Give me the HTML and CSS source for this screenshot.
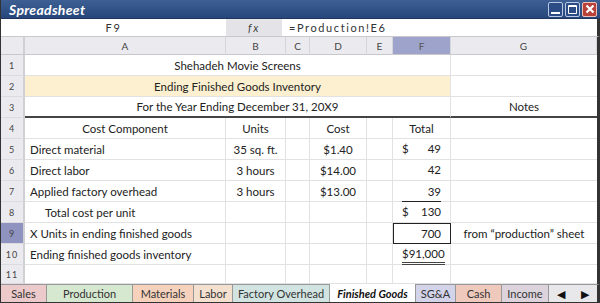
FILE: index.html
```html
<!DOCTYPE html>
<html>
  <head>
    <link rel="stylesheet" href="styles.css">
  </head>
  <body>
    <div class="window">
      <div class="titlebar">
        <span class="title">Spreadsheet</span>
        <div class="controls">
          <span class="btn btn--min"></span>
          <span class="btn btn--max"></span>
          <span class="btn btn--close">
            <svg width="10" height="10" viewBox="0 0 10 10"><path d="M1.5 1.5 L8.5 8.5 M8.5 1.5 L1.5 8.5" stroke="#fff" stroke-width="2.2"/></svg>
          </span>
        </div>
      </div>

      <div class="formula">
        <div class="namebox">F9</div>
        <div class="fx">fx</div>
        <div class="expr">=Production!E6</div>
      </div>

      <div class="sheet">
        <!-- column headers -->
        <div class="ch corner"></div>
        <div class="ch">A</div>
        <div class="ch">B</div>
        <div class="ch">C</div>
        <div class="ch">D</div>
        <div class="ch">E</div>
        <div class="ch ch--sel">F</div>
        <div class="ch">G</div>

        <!-- 1 -->
        <div class="rh">1</div>
        <div class="c span ctr">Shehadeh Movie Screens</div>
        <div class="c g"></div>
        <!-- 2 -->
        <div class="rh">2</div>
        <div class="c span ctr heading">Ending Finished Goods Inventory</div>
        <div class="c g"></div>
        <!-- 3 -->
        <div class="rh">3</div>
        <div class="c span ctr rule">For the Year Ending December 31, 20X9</div>
        <div class="c g ctr rule">Notes</div>

        <!-- 4 -->
        <div class="rh">4</div>
        <div class="c ctr">Cost Component</div>
        <div class="c ctr">Units</div>
        <div class="c"></div>
        <div class="c ctr">Cost</div>
        <div class="c"></div>
        <div class="c ctr">Total</div>
        <div class="c g"></div>

        <!-- 5 -->
        <div class="rh">5</div>
        <div class="c">Direct material</div>
        <div class="c ctr">35 sq. ft.</div>
        <div class="c"></div>
        <div class="c ctr">$1.40</div>
        <div class="c"></div>
        <div class="c amt"><span class="num"><span>$</span><span>49</span></span></div>
        <div class="c g"></div>

        <!-- 6 -->
        <div class="rh">6</div>
        <div class="c">Direct labor</div>
        <div class="c ctr">3 hours</div>
        <div class="c"></div>
        <div class="c ctr">$14.00</div>
        <div class="c"></div>
        <div class="c amt"><span class="num"><span></span><span>42</span></span></div>
        <div class="c g"></div>

        <!-- 7 -->
        <div class="rh">7</div>
        <div class="c">Applied factory overhead</div>
        <div class="c ctr">3 hours</div>
        <div class="c"></div>
        <div class="c ctr">$13.00</div>
        <div class="c"></div>
        <div class="c amt"><span class="num underline"><span></span><span>39</span></span></div>
        <div class="c g"></div>

        <!-- 8 -->
        <div class="rh">8</div>
        <div class="c indent">Total cost per unit</div>
        <div class="c"></div>
        <div class="c"></div>
        <div class="c"></div>
        <div class="c"></div>
        <div class="c amt"><span class="num"><span>$</span><span>130</span></span></div>
        <div class="c g"></div>

        <!-- 9 -->
        <div class="rh rh--sel">9</div>
        <div class="c">X Units in ending finished goods</div>
        <div class="c"></div>
        <div class="c"></div>
        <div class="c"></div>
        <div class="c"></div>
        <div class="c amt active"><span class="num underline"><span></span><span>700</span></span></div>
        <div class="c g ctr">from “production” sheet</div>

        <!-- 10 -->
        <div class="rh">10</div>
        <div class="c">Ending finished goods inventory</div>
        <div class="c"></div>
        <div class="c"></div>
        <div class="c"></div>
        <div class="c"></div>
        <div class="c amt"><span class="num double"><span></span><span>$91,000</span></span></div>
        <div class="c g"></div>

        <!-- 11 -->
        <div class="rh">11</div>
        <div class="c"></div>
        <div class="c"></div>
        <div class="c"></div>
        <div class="c"></div>
        <div class="c"></div>
        <div class="c"></div>
        <div class="c g"></div>
      </div>

      <div class="tabs">
        <span class="tab tab--sales">Sales</span>
        <span class="tab tab--production">Production</span>
        <span class="tab tab--materials">Materials</span>
        <span class="tab tab--labor">Labor</span>
        <span class="tab tab--overhead">Factory Overhead</span>
        <span class="tab tab--current">Finished Goods</span>
        <span class="tab tab--sga">SG&amp;A</span>
        <span class="tab tab--cash">Cash</span>
        <span class="tab tab--income">Income</span>
        <span class="tab tab--nav"><span>◀</span><span>▶</span></span>
      </div>
    </div>
  </body>
</html>
```
FILE: styles.css
```css
body {
  margin: 0;
  background: #fff;
  font-family: Lato, "Open Sans", sans-serif;
  color: #222;
}

.window {
  width: 600px;
  height: 303px;
  box-sizing: border-box;
  border-left: 1px solid #333;
  overflow: hidden;
}

/* title bar */
.titlebar {
  height: 19px;
  background: linear-gradient(#3d5f94, #27477a);
  border-bottom: 1px solid #1d3560;
  box-sizing: border-box;
  display: flex;
  align-items: center;
  justify-content: space-between;
  padding: 0 3px 0 8px;
}
.title {
  color: #fff;
  font-weight: bold;
  font-style: italic;
  font-size: 14px;
  letter-spacing: 0.3px;
}
.controls { display: flex; gap: 2px; }
.btn {
  width: 15px;
  height: 15px;
  box-sizing: border-box;
  border: 1px solid #b8c8e4;
  border-radius: 2px;
  background: #2c4c86;
  position: relative;
  display: flex;
  align-items: center;
  justify-content: center;
}
.btn--min::after {
  content: "";
  position: absolute;
  left: 2px; right: 2px; bottom: 2px;
  height: 2px;
  background: #fff;
}
.btn--max::after {
  content: "";
  position: absolute;
  left: 2px; right: 2px; top: 2px; bottom: 2px;
  border: 1px solid #fff;
  border-top-width: 2px;
  border-radius: 1px;
}
.btn--close { background: #b8413a; border-color: #f0c0b8; }

/* formula bar */
.formula {
  height: 17px;
  display: grid;
  grid-template-columns: 225px 56px 1fr;
  border-bottom: 1px solid #c8c8cc;
  border-right: 3px solid #333;
  font-size: 11px;
  letter-spacing: 1.6px;
  line-height: 17px;
}
.namebox { text-align: center; color: #333; }
.fx {
  background: #e4e4e8;
  text-align: center;
  font-style: italic;
  color: #444;
}
.expr { padding-left: 7px; color: #333; }

/* sheet grid */
.sheet {
  display: grid;
  grid-template-columns: 24px 201px 60px 24px 57px 26px 58px 146px;
  grid-template-rows: 18px repeat(10, 21px) 19px;
  border-right: 3px solid #333;
  font-size: 11.5px;
}
.ch {
  background: #ebebef;
  border-right: 1px solid #d6d6da;
  border-bottom: 1px solid #c8c8cc;
  font-size: 10px;
  color: #444;
  display: flex;
  align-items: center;
  justify-content: center;
}
.corner { border-right: 2px solid #d0d0d4; }
.ch--sel { background: #9ea3cc; color: #555; }

.rh {
  background: #ebebef;
  border-right: 2px solid #d0d0d4;
  border-bottom: 1px solid #dcdce0;
  font-size: 9px;
  color: #444;
  display: flex;
  align-items: center;
  justify-content: center;
  letter-spacing: 1px;
}
.rh--sel { background: #8f93bf; }

.c {
  border-right: 1px solid #e2e2e4;
  border-bottom: 1px solid #e2e2e4;
  display: flex;
  align-items: center;
  padding: 0 5px;
  white-space: nowrap;
  min-width: 0;
}
.c.g { border-right: none; }
.span { grid-column: span 6; }
.ctr { justify-content: center; padding: 0; }
.heading { background: #fcf0d0; }
.rule { border-bottom: 2px solid #444; }
.indent { padding-left: 20px; }

.amt { padding: 0 9px 0 9px; }
.num {
  flex: 1;
  display: flex;
  justify-content: space-between;
  line-height: 14px;
}
.underline { border-bottom: 1px solid #222; padding-bottom: 2px; margin-top: 4px; }
.double { border-bottom: 3px double #444; padding-bottom: 1px; margin-top: 4px; }
.active { border: 1px solid #222; }

/* sheet tabs */
.tabs {
  height: 20px;
  display: flex;
  border-top: 1px solid #999;
  border-bottom: 2px solid #333;
  border-right: 3px solid #333;
  box-sizing: border-box;
  font-size: 11px;
}
.tab {
  display: flex;
  align-items: center;
  justify-content: center;
  border-right: 1px solid #999;
  box-sizing: border-box;
  color: #333;
}
.tab--sales { width: 46px; background: #ecc9ca; }
.tab--production { width: 86px; background: #d6e8d0; }
.tab--materials { width: 61px; background: #f6d2bd; }
.tab--labor { width: 39px; background: #f3e0cf; }
.tab--overhead { width: 97px; background: #d1e4e2; }
.tab--current {
  width: 86px;
  background: #fff;
  font-weight: bold;
  font-style: italic;
  color: #111;
  margin-top: -1px;
}
.tab--sga { width: 40px; background: #d3d3ea; }
.tab--cash { width: 46px; background: #efc9bc; }
.tab--income { width: 47px; background: #dcd3dc; }
.tab--nav {
  flex: 1;
  border-right: none;
  background: #e8e8ea;
  justify-content: space-around;
  font-size: 11px;
  color: #111;
}
```
